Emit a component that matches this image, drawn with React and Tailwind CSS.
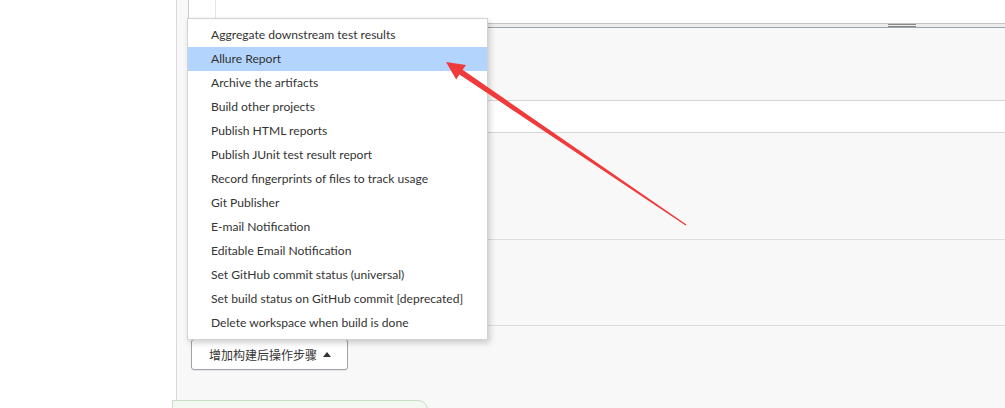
import React from "react";

const items = [
  "Aggregate downstream test results",
  "Allure Report",
  "Archive the artifacts",
  "Build other projects",
  "Publish HTML reports",
  "Publish JUnit test result report",
  "Record fingerprints of files to track usage",
  "Git Publisher",
  "E-mail Notification",
  "Editable Email Notification",
  "Set GitHub commit status (universal)",
  "Set build status on GitHub commit [deprecated]",
  "Delete workspace when build is done",
];

export default function App() {
  return (
    <div
      className="relative w-[1005px] h-[408px] overflow-hidden bg-white flex"
      style={{ fontFamily: '"Noto Sans", "Open Sans", Arial, sans-serif' }}
    >
      {/* left white column */}
      <div className="w-[176px] shrink-0 bg-white" />
      {/* main content */}
      <div className="flex-1 border-l border-[#d9d9d9] bg-[#f8f8f8] flex flex-col">
        <div className="pl-[11px] flex flex-col">
          {/* textarea bottom */}
          <div className="h-[23px] bg-white border-l border-[#c8c8c8] flex">
            <div className="w-[27px] border-r border-[#e6e6e6]" />
            <div className="flex-1" />
          </div>
          <div className="h-[5px] bg-[#ececec] border-t border-[#c4c4c4] border-b border-b-[#9aa4ae] relative">
            <div className="absolute left-[700px] top-[0px] w-[28px] h-[3px] border-t border-b border-[#888]" />
          </div>
          <div className="h-[72px]" />
          <div className="h-[33px] bg-white border-t border-b border-[#d6d6d6]" />
          <div className="h-[106px]" />
          <div className="h-[87px] border-t border-b border-[#dcdcdc]" />
          <div className="pt-[13px] pl-[3px]">
            <button className="h-[31px] w-[157px] bg-white border border-[#9ea4aa] rounded-[3px] flex items-center pl-[17px] gap-[6px] text-[12px] text-[#333] shadow-[0_1px_1px_rgba(0,0,0,0.08)]"
              style={{ fontFamily: '"Noto Sans CJK SC", "Noto Sans", sans-serif' }}>
              <span>增加构建后操作步骤</span>
              <svg width="8" height="5" viewBox="0 0 8 5">
                <path d="M0 5 L4 0 L8 5 Z" fill="#333" />
              </svg>
            </button>
          </div>
        </div>
      </div>

      {/* green box at bottom */}
      <div className="absolute left-[172px] top-[400px] w-[256px] h-[20px] bg-[#f3f9f2] border border-[#c8dcc6] rounded-tr-[10px]" />

      {/* dropdown menu */}
      <div
        className="absolute left-[187px] top-[18px] w-[301px] bg-white border border-[#d2d2d2] py-[4px] shadow-[2px_3px_6px_rgba(0,0,0,0.18)]"
        style={{ fontFamily: 'Lato, "Noto Sans", Arial, sans-serif' }}
      >
        {items.map((t, i) => (
          <div
            key={t}
            className={
              "h-[24px] leading-[24px] pl-[23px] text-[12.1px] text-[#333] whitespace-nowrap " +
              (i === 1 ? "bg-[#b3d4fc]" : "")
            }
          >
            {t}
          </div>
        ))}
      </div>

      {/* red arrow */}
      <svg className="absolute left-0 top-0 pointer-events-none" width="1005" height="408" viewBox="0 0 1005 408">
        <polygon
          points="446,62 466,65 462.6,69.8 686.4,224.6 685.6,225.4 459.4,74.6 456.2,79.5"
          fill="#ef3b3b"
        />
      </svg>
    </div>
  );
}
